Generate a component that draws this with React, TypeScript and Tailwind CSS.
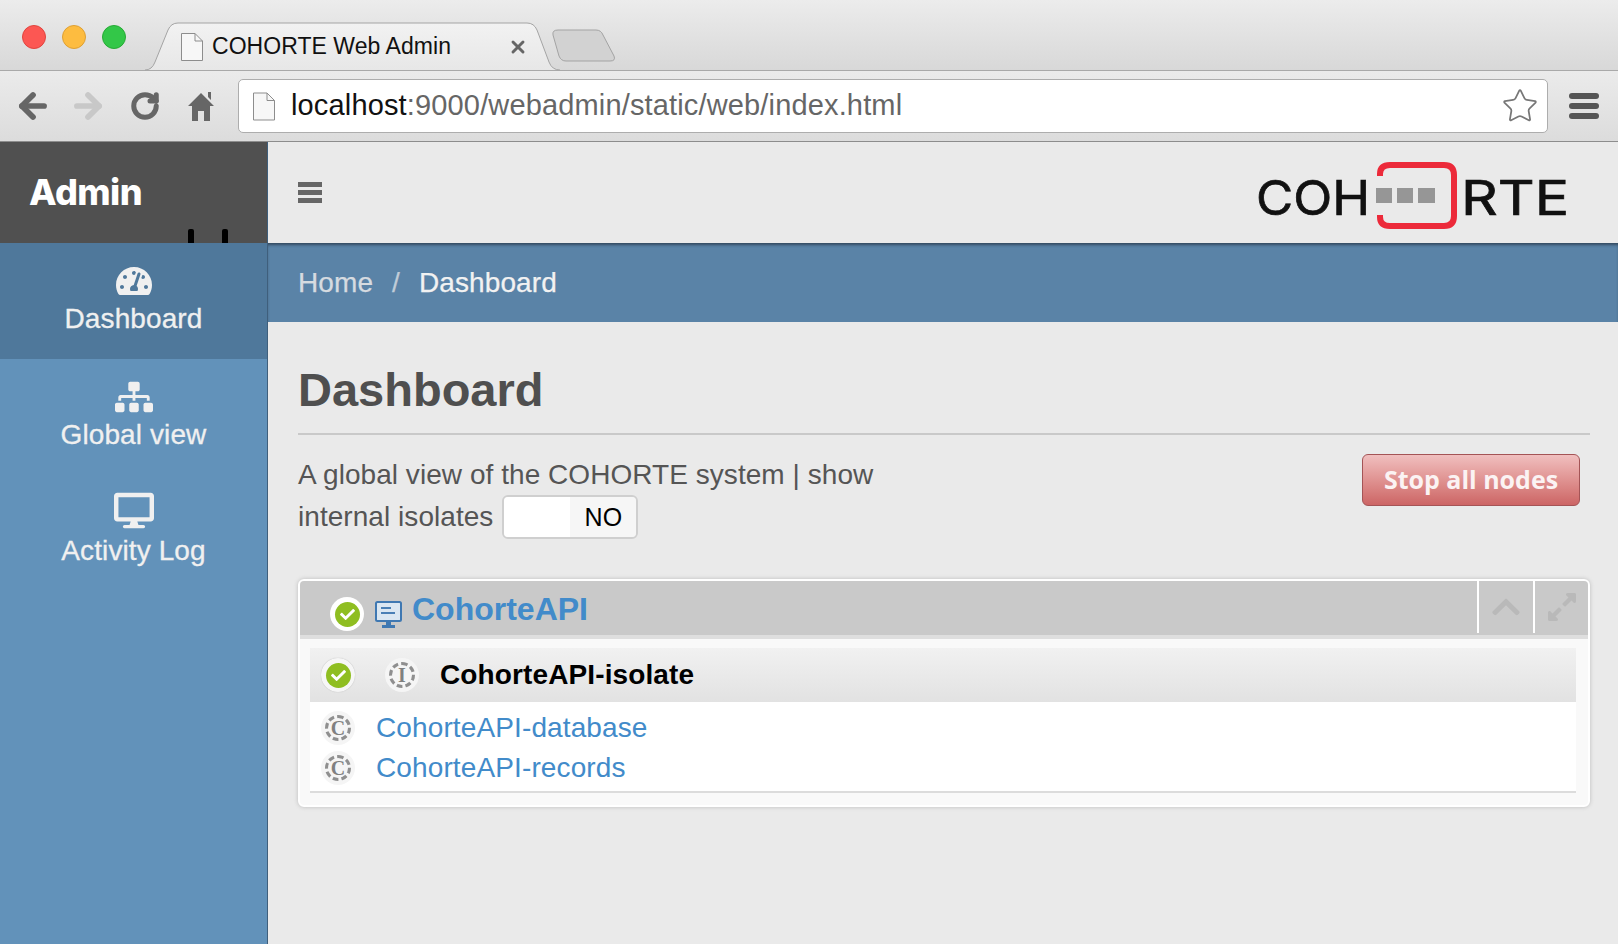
import React from 'react';
import { ArrowLeft, ArrowRight, RotateCw, Star, X } from 'lucide-react';
import { FaTachometerAlt, FaSitemap, FaDesktop, FaChevronUp, FaExpandAlt, FaCheck } from 'react-icons/fa';

const PageIcon = ({ className }: { className: string }) => (
  <svg className={className} viewBox="0 0 22 28" fill="none">
    <path d="M0.5 0.5H14L21.5 8V27.5H0.5Z" fill="#f7f7f7" stroke="#8d8d8d" />
    <path d="M14 0.5V8H21.5" stroke="#8d8d8d" />
  </svg>
);

const StatusDot = ({ size }: { size: 'lg' | 'md' }) => (
  <span className={size === 'lg' ? 'flex h-[34px] w-[34px] items-center justify-center rounded-full bg-white' : 'flex h-[34px] w-[34px] items-center justify-center rounded-full bg-[#f6f6f6] shadow-[0_0_1px_#aaa]'}>
    <span className="flex h-[25px] w-[25px] items-center justify-center rounded-full bg-[#8fbe21]">
      <FaCheck className="h-[15px] w-[15px] text-white" />
    </span>
  </span>
);

const LetterBadge = ({ letter }: { letter: string }) => (
  <span className="flex h-[34px] w-[34px] items-center justify-center rounded-full bg-[#f5f5f5]">
    <span className="flex h-[26px] w-[26px] items-center justify-center rounded-full border-[3px] border-dashed border-[#8f8f8f] font-['Liberation_Serif',serif] text-[20px] font-bold leading-none text-[#808080]">
      {letter}
    </span>
  </span>
);

const NavItem = ({ icon, label, active }: { icon: React.ReactNode; label: string; active?: boolean }) => (
  <div className={`flex h-[116px] flex-col items-center pt-[20px] text-[28px] leading-[44px] tracking-[0.1px] text-[#f0f0f0] [-webkit-text-stroke:0.3px] ${active ? 'bg-[#4f789b]' : ''}`}>
    <div className="flex h-[36px] items-center">{icon}</div>
    <div className="mt-[-2px]">{label}</div>
  </div>
);

const Logo = () => (
  <svg width="320" height="70" viewBox="0 0 320 70" className="mr-[42px] mt-[9px]">
    <text x="0" y="53" fontFamily="Inter, sans-serif" fontSize="48" fontWeight="400" fill="#111" stroke="#111" strokeWidth="0.7" textLength="114" lengthAdjust="spacingAndGlyphs">COH</text>
    <path d="M124 14V12Q124 3 134 3H188Q198 3 198 13V54Q198 64 188 64H134Q124 64 124 55V53" fill="none" stroke="#ec2a3a" strokeWidth="6" />
    <rect x="120" y="26" width="16" height="15" fill="#969696" />
    <rect x="141" y="26" width="16" height="15" fill="#969696" />
    <rect x="162" y="26" width="17" height="15" fill="#969696" />
    <text x="205" y="53" fontFamily="Inter, sans-serif" fontSize="48" fontWeight="400" fill="#111" stroke="#111" strokeWidth="0.7" textLength="108" lengthAdjust="spacingAndGlyphs">RTE</text>
  </svg>
);

export default function App() {
  return (
    <div className="flex h-[944px] w-full flex-col overflow-hidden bg-[#eaeaea] font-['Liberation_Sans',sans-serif]">
      {/* tab strip */}
      <div className="flex h-[71px] items-end border-b border-[#a9a9a9] bg-gradient-to-b from-[#ececec] to-[#d8d8d8] pl-[22px]">
        <div className="mb-[21px] flex w-[123px] gap-[16px]">
          <span className="h-[24px] w-[24px] rounded-full border border-[#e0443e] bg-[#fc5753]" />
          <span className="h-[24px] w-[24px] rounded-full border border-[#dea034] bg-[#fdbc40]" />
          <span className="h-[24px] w-[24px] rounded-full border border-[#27aa35] bg-[#33c748]" />
        </div>
        <div className="relative mb-[-1px] flex h-[49px] w-[415px] items-center pl-[36px]">
          <svg className="absolute inset-0" width="415" height="49" viewBox="0 0 415 49">
            <defs>
              <linearGradient id="tabFill" x1="0" y1="0" x2="0" y2="1">
                <stop offset="0" stopColor="#f2f2f2" />
                <stop offset="1" stopColor="#e7e7e7" />
              </linearGradient>
            </defs>
            <path d="M0 48Q7 48 10 40L23 8Q26 1 33 1H382Q389 1 392 8L404 40Q407 48 415 48" fill="url(#tabFill)" stroke="#a4a4a4" />
          </svg>
          <PageIcon className="relative h-[28px] w-[22px]" />
          <span className="relative ml-[9px] text-[23px] tracking-[0.05px] text-[#111]">COHORTE Web Admin</span>
          <X className="relative ml-[57px] h-[20px] w-[20px] text-[#666]" strokeWidth={3.5} />
        </div>
        <svg className="mb-[8px] ml-[-8px]" width="64" height="33" viewBox="0 0 64 33">
          <path d="M1 6Q0 1 6 1H44Q49 1 51 6L62 27Q64 32 58 32H14Q9 32 7 27Z" fill="#d2d2d2" stroke="#a3a3a3" />
        </svg>
      </div>

      {/* toolbar */}
      <div className="flex h-[71px] items-center border-b border-[#8d8d8d] bg-gradient-to-b from-[#ebebeb] to-[#dcdcdc] pl-[14px]">
        <ArrowLeft className="h-[38px] w-[38px] text-[#666]" strokeWidth={3.6} />
        <ArrowRight className="ml-[17px] h-[38px] w-[38px] text-[#c8c8c8]" strokeWidth={3.6} />
        <RotateCw className="ml-[23px] h-[30px] w-[30px] text-[#666]" strokeWidth={4} />
        <svg className="ml-[27px] h-[32px] w-[28px]" viewBox="0 0 28 32">
          <path d="M14 3L27 16H23V31H17V21H11V31H5V16H1Z M21 2H24V10L21 7Z" fill="#666" />
        </svg>
        <div className="ml-[23px] flex h-[54px] w-[1310px] items-center rounded-[5px] border border-[#adadad] bg-white pl-[14px]">
          <PageIcon className="h-[29px] w-[22px]" />
          <div className="ml-[16px] flex-1 text-[29px] tracking-[0.15px] text-[#666]">
            <span className="text-[#111]">localhost</span>:9000/webadmin/static/web/index.html
          </div>
          <Star className="mr-[8px] h-[38px] w-[38px] text-[#777]" strokeWidth={1.1} />
        </div>
        <div className="ml-[21px] flex w-[30px] flex-col gap-[4px]">
          <span className="h-[6px] rounded-[3px] bg-[#555]" />
          <span className="h-[6px] rounded-[3px] bg-[#555]" />
          <span className="h-[6px] rounded-[3px] bg-[#555]" />
        </div>
      </div>

      <div className="flex min-h-0 flex-1">
        {/* sidebar */}
        <div className="flex w-[268px] shrink-0 flex-col border-r border-[#3f5f7c] bg-[#6292ba]">
          <div className="relative flex h-[101px] items-center bg-[#505050] pb-[1px] pl-[29px]">
            <span className="font-['Inter',sans-serif] text-[36px] font-extrabold tracking-[-0.6px] text-white">Admin</span>
            <span className="absolute bottom-0 left-[188px] h-[14px] w-[6px] rounded-t-[2px] bg-black" />
            <span className="absolute bottom-0 left-[222px] h-[14px] w-[6px] rounded-t-[2px] bg-black" />
          </div>
          <NavItem active icon={<FaTachometerAlt className="h-[36px] w-[36px]" />} label="Dashboard" />
          <NavItem icon={<FaSitemap className="h-[38px] w-[38px]" />} label="Global view" />
          <NavItem icon={<FaDesktop className="mt-[-5px] h-[37px] w-[40px]" />} label="Activity Log" />
        </div>

        <div className="flex min-w-0 flex-1 flex-col">
          {/* header */}
          <div className="flex h-[101px] items-center justify-between pl-[30px]">
            <div className="flex w-[24px] flex-col gap-[3.5px]">
              <span className="h-[4.5px] bg-[#666]" />
              <span className="h-[4.5px] bg-[#666]" />
              <span className="h-[4.5px] bg-[#666]" />
            </div>
            <Logo />
          </div>

          {/* breadcrumb */}
          <div className="flex h-[79px] items-center bg-[#5a83a7] pl-[30px] text-[28px] tracking-[0.1px] shadow-[inset_0_3px_3px_-1px_#334a60] [-webkit-text-stroke:0.25px]">
            <span className="text-[#d6dbe0]">Home</span>
            <span className="mx-[19px] text-[#c0ccd8]">/</span>
            <span className="text-[#f2f2f2]">Dashboard</span>
          </div>

          {/* page */}
          <div className="pl-[30px] pr-[28px]">
            <h1 className="mt-[38px] border-b-2 border-[#c9c9c9] pb-[13px] text-[47px] font-bold leading-[60px] text-[#4f4f4f]">Dashboard</h1>
            <div className="mr-[10px] mt-[19px] flex items-start justify-between">
              <div className="pt-[1px] text-[28px] leading-[40px] tracking-[0.05px] text-[#555]">
                <div>A global view of the COHORTE system | show</div>
                <div className="flex items-center">
                  <span>internal isolates</span>
                  <span className="ml-[9px] flex h-[44px] w-[136px] overflow-hidden rounded-[6px] border-2 border-[#cfcfcf]">
                    <span className="w-[66px] bg-white" />
                    <span className="flex flex-1 items-center justify-center bg-[#f6f6f6] text-[25px] text-black">NO</span>
                  </span>
                </div>
              </div>
              <button className="h-[52px] w-[218px] rounded-[6px] border border-[#a45456] bg-gradient-to-b from-[#f0bfbf] to-[#cc6565] font-['Open_Sans',sans-serif] text-[25px] font-bold text-[#fbf3f3]">
                Stop all nodes
              </button>
            </div>

            {/* node panel */}
            <div className="mt-[40px] w-[1292px] overflow-hidden rounded-[6px] border-2 border-white bg-[#f9f9f9] pb-[12px] shadow-[0_0_4px_#bbb]">
              <div className="flex h-[58px] items-stretch border-b-[4px] border-[#dedede] bg-[#c9c9c9]">
                <div className="flex flex-1 items-center pl-[30px]">
                  <span className="mt-[12px]"><StatusDot size="lg" /></span>
                  <svg className="ml-[11px] mt-[14px] h-[28px] w-[27px]" viewBox="0 0 27 28">
                    <rect x="1" y="1" width="25" height="19" rx="1.5" fill="#dbe7f2" stroke="#3f78b2" strokeWidth="2" />
                    <path d="M6 7H16M6 12H20" stroke="#4a7fb5" strokeWidth="2" />
                    <path d="M11 20H16V24H20V27H7V24H11Z" fill="#3f78b2" />
                  </svg>
                  <span className="ml-[10px] mt-[2px] text-[32px] font-bold text-[#428bca]">CohorteAPI</span>
                </div>
                <div className="mb-[2px] flex w-[56px] items-center justify-center border-l-2 border-white">
                  <FaChevronUp className="h-[32px] w-[32px] text-[#b9b9b9]" />
                </div>
                <div className="mb-[2px] flex w-[55px] items-center justify-center border-l-2 border-white">
                  <FaExpandAlt className="h-[32px] w-[32px] text-[#b9b9b9]" />
                </div>
              </div>
              <div className="mx-[10px] mt-[9px] w-[1266px] border-b-2 border-[#dcdcdc] bg-white">
                <div className="flex h-[54px] items-center bg-gradient-to-b from-[#f1f1f1] to-[#e2e2e2] pl-[11px]">
                  <StatusDot size="md" />
                  <span className="ml-[30px]"><LetterBadge letter="I" /></span>
                  <span className="ml-[21px] text-[28px] font-bold tracking-[0.12px] text-black">CohorteAPI-isolate</span>
                </div>
                <div className="pb-[3px] pt-[6px]">
                  <div className="flex h-[40px] items-center pl-[11px]">
                    <LetterBadge letter="C" />
                    <span className="ml-[21px] text-[28px] tracking-[0.12px] text-[#428bca]">CohorteAPI-database</span>
                  </div>
                  <div className="flex h-[40px] items-center pl-[11px]">
                    <LetterBadge letter="C" />
                    <span className="ml-[21px] text-[28px] tracking-[0.12px] text-[#428bca]">CohorteAPI-records</span>
                  </div>
                </div>
              </div>
            </div>
          </div>
        </div>
      </div>
    </div>
  );
}
